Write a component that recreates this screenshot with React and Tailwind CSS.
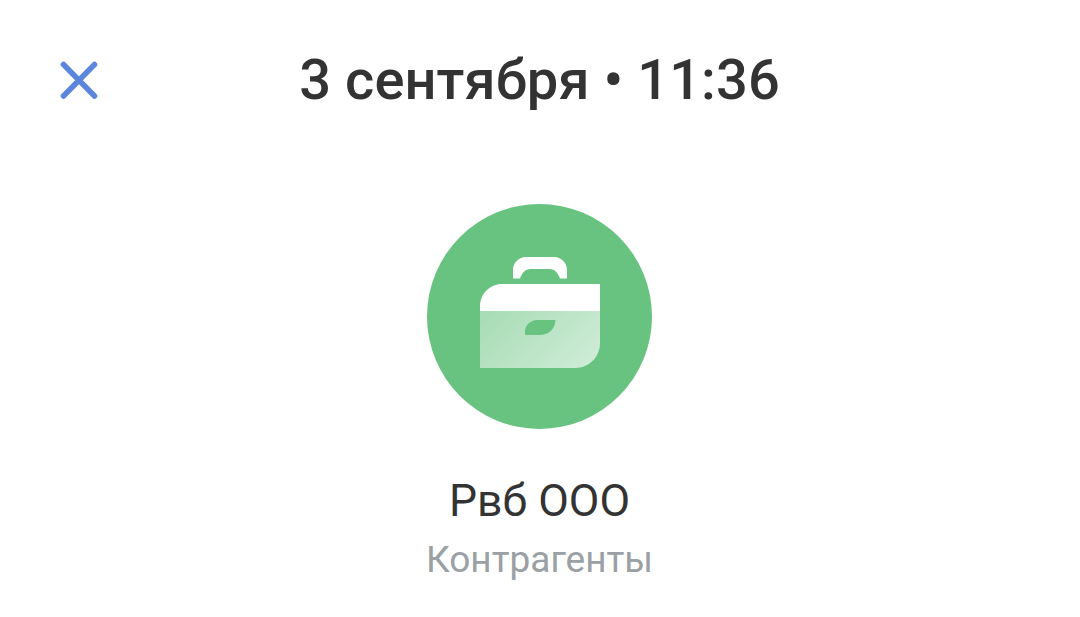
import React from "react";

function CloseIcon() {
  return (
    <svg width="40" height="40" viewBox="0 0 40 40" fill="none">
      <path d="M4.5 4.5 L35.5 36 M35.5 4.5 L4.5 36" stroke="#5b86dc" strokeWidth="5.5" strokeLinecap="round" />
    </svg>
  );
}

function BriefcaseIcon() {
  // viewBox is 1:1 with page pixels, origin at the circle's corner
  return (
    <svg width="225" height="225" viewBox="0 0 225 225" fill="none">
      <defs>
        <linearGradient id="caseFade" x1="70" y1="95" x2="150" y2="175" gradientUnits="userSpaceOnUse">
          <stop offset="0" stopColor="#ffffff" stopOpacity="0.42" />
          <stop offset="1" stopColor="#ffffff" stopOpacity="0.68" />
        </linearGradient>
      </defs>
      {/* handle */}
      <path
        d="M86 74.5 V66 C86 58.5 92 53 99 53 H127 C134 53 140 58.5 140 66 V74.5 H133 C131 69 128 65 122 65 H104 C98 65 95 69 93 74.5 Z"
        fill="#ffffff"
      />
      {/* top half */}
      <path d="M53 107 V102 C53 90 63 80 75 80 H173 V107 Z" fill="#ffffff" />
      {/* bottom half */}
      <path d="M53 107 H173 V139 C173 153 162 164 148 164 H53 Z" fill="url(#caseFade)" />
      {/* leaf */}
      <path d="M98 131 V127 C98 121 104 116 110 116 H128.5 C128 125 122 131 112 131 Z" fill="#68c380" />
    </svg>
  );
}

export default function App() {
  return (
    <div className="w-[1080px] h-[617px] bg-white flex flex-col items-center pr-px overflow-hidden font-['Roboto',sans-serif]">
      {/* Header */}
      <div className="w-full grid grid-cols-[1fr_auto_1fr] items-center pl-[59px] pr-[59px] pt-[40px]">
        <button className="w-[40px] h-[40px]">
          <CloseIcon />
        </button>
        <h1 className="text-[56px] leading-[80px] font-medium text-[#333333] whitespace-nowrap tracking-[0.1px]">3 сентября • 11:36</h1>
        <div />
      </div>

      {/* Counterparty */}
      <div className="mt-[84px] w-[225px] h-[225px] rounded-full bg-[#68c380]">
        <BriefcaseIcon />
      </div>
      <div className="mt-[46px] text-[44.5px] leading-[52px] text-[#333333]">Рвб ООО</div>
      <div className="mt-[13px] text-[37px] leading-[40px] text-[#9aa0a4]">Контрагенты</div>
    </div>
  );
}
